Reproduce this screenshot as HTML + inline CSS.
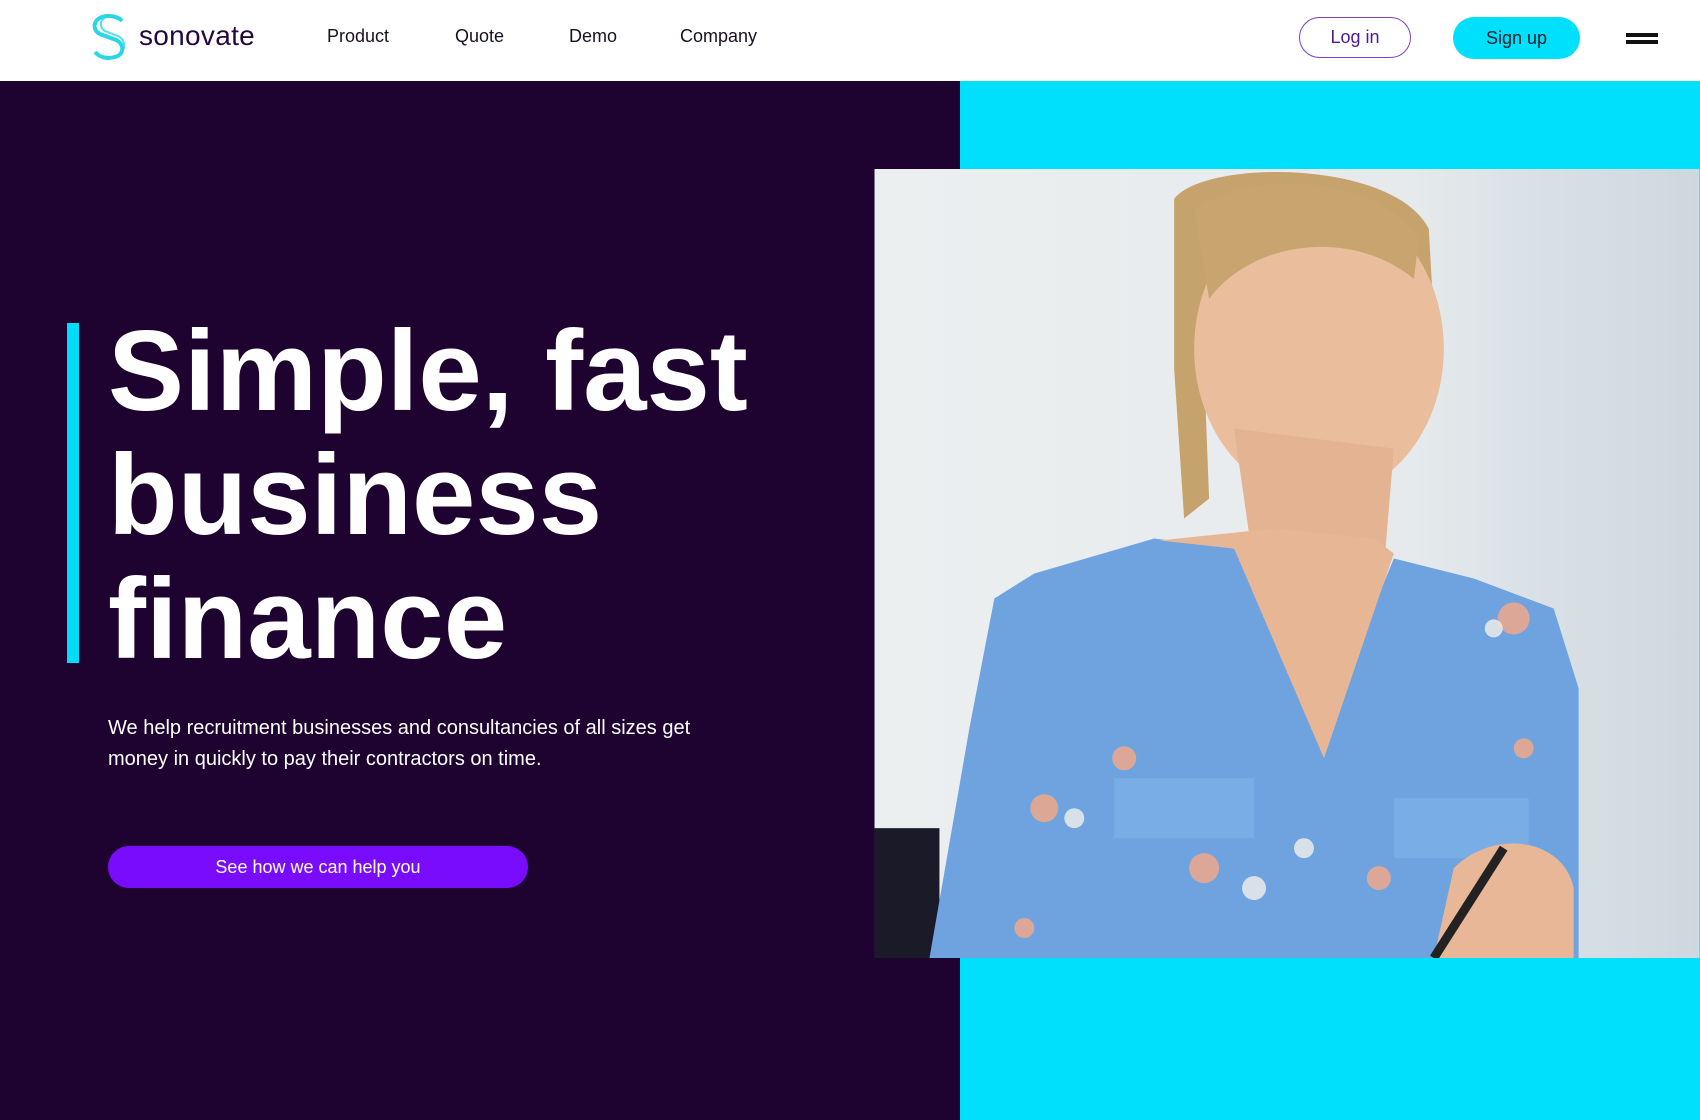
<!DOCTYPE html>
<html><head><meta charset="utf-8"><style>
*{margin:0;padding:0;box-sizing:border-box}
body{width:1700px;height:1120px;overflow:hidden;font-family:"Liberation Sans",sans-serif;background:#fff;position:relative}
.hdr{position:absolute;left:0;top:0;width:1700px;height:81px;background:#fff}
.nav{position:absolute;top:26px;font-size:18px;color:#1a1020}
.logo{position:absolute;left:139px;top:20px;font-size:28px;color:#24083f;letter-spacing:0.3px}
.btn{position:absolute;border-radius:22px;font-size:18px;text-align:center;line-height:42px}
.left{position:absolute;left:0;top:81px;width:960px;height:1039px;background:#1e0330}
.right{position:absolute;left:960px;top:81px;width:740px;height:1039px;background:#00e0fd}
.bar{position:absolute;left:67px;top:323px;width:12px;height:340px;background:#00dcfa}
h1{position:absolute;left:108px;top:310px;font-size:114px;line-height:124px;color:#fff;font-weight:bold;letter-spacing:0px}
p{position:absolute;left:108px;top:713px;font-size:20px;line-height:31px;color:#fff}
.cta{position:absolute;left:108px;top:846px;width:420px;height:42px;border-radius:21px;background:#7a0cfe;color:#fff;font-size:18px;text-align:center;line-height:42px}
</style></head><body>
<div class="hdr">
<svg style="position:absolute;left:88px;top:13px" width="42" height="47" viewBox="0 0 42 47"><path d="M34 8 C30 3 20 2 14 4 C5 7 4 17 12 21 L28 27 C37 31 36 42 27 44 C20 46 12 45 7 39" fill="none" stroke="#2ad6e6" stroke-width="4"/><path d="M22 3 C12 4 10 14 17 18 L30 23 C39 27 38 40 28 43" fill="none" stroke="#2ad6e6" stroke-width="2" opacity=".8"/></svg>
<div class="logo">sonovate</div>
<div class="nav" style="left:327px">Product</div>
<div class="nav" style="left:455px">Quote</div>
<div class="nav" style="left:569px">Demo</div>
<div class="nav" style="left:680px">Company</div>
<div class="btn" style="left:1299px;top:17px;width:112px;border:1.5px solid #7a3fc0;color:#4a1a99;line-height:39px">Log in</div>
<div class="btn" style="left:1453px;top:17px;width:127px;background:#00e0fd;color:#12202a">Sign up</div>
<div style="position:absolute;left:1626px;top:33px;width:32px;height:4px;background:#111"></div>
<div style="position:absolute;left:1626px;top:40px;width:32px;height:4px;background:#111"></div>
</div>
<div class="left"></div>
<div class="right"></div>
<svg style="position:absolute;left:874px;top:169px" width="826" height="789" viewBox="0 0 826 790">
<defs><linearGradient id="bg" x1="0" x2="1"><stop offset="0" stop-color="#eceff0"/><stop offset=".65" stop-color="#e6eaec"/><stop offset=".8" stop-color="#d9e1e6"/><stop offset="1" stop-color="#cdd8de"/></linearGradient></defs>
<rect width="826" height="790" fill="url(#bg)"/>
<rect x="0" y="660" width="65" height="130" fill="#1a1a28"/>
<path d="M300 30 C330 -10 520 -10 555 60 L560 150 L520 100 L360 90 L330 200 L335 330 L310 350 L300 200 Z" fill="#c6a36c"/>
<ellipse cx="445" cy="180" rx="125" ry="150" fill="#eabd9d"/>
<path d="M320 40 C380 0 500 5 545 70 L540 110 C480 60 380 70 335 130 Z" fill="#c8a56e"/>
<path d="M360 260 L520 280 L510 400 L380 400 Z" fill="#e4b392"/>
<path d="M55 790 L95 560 L120 430 L160 405 L280 370 L360 380 L450 560 L520 390 L600 410 L680 440 L705 520 L705 790 Z" fill="#6ea3e0"/>
<path d="M285 372 L360 380 L450 590 L520 385 L500 370 L400 360 Z" fill="#e7b695"/>
<rect x="240" y="610" width="140" height="60" fill="#78ade6"/>
<rect x="520" y="630" width="135" height="60" fill="#78ade6"/>
<g fill="#f1a88a" opacity=".85"><circle cx="170" cy="640" r="14"/><circle cx="250" cy="590" r="12"/><circle cx="330" cy="700" r="15"/><circle cx="640" cy="450" r="16"/><circle cx="505" cy="710" r="12"/><circle cx="150" cy="760" r="10"/><circle cx="650" cy="580" r="10"/></g>
<g fill="#f4f0ea" opacity=".8"><circle cx="200" cy="650" r="10"/><circle cx="380" cy="720" r="12"/><circle cx="620" cy="460" r="9"/><circle cx="430" cy="680" r="10"/></g>
<path d="M580 700 C620 660 690 670 700 720 L700 790 L560 790 Z" fill="#e8b797"/>
<path d="M560 790 L630 680" stroke="#222" stroke-width="9"/>
</svg>
<div class="bar"></div>
<h1>Simple, fast<br>business<br>finance</h1>
<p>We help recruitment businesses and consultancies of all sizes get<br>money in quickly to pay their contractors on time.</p>
<div class="cta">See how we can help you</div>
</body></html>
